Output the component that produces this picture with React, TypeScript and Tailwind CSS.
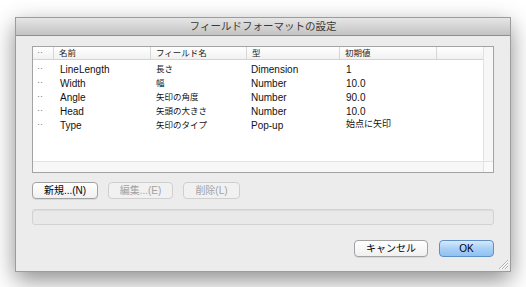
import React from "react";

const font = { fontFamily: '"Liberation Sans", "Noto Sans CJK JP", sans-serif' };

type Row = { name: string; field: string; type: string; init: string; initJp?: boolean };

const rows: Row[] = [
  { name: "LineLength", field: "長さ", type: "Dimension", init: "1" },
  { name: "Width", field: "幅", type: "Number", init: "10.0" },
  { name: "Angle", field: "矢印の角度", type: "Number", init: "90.0" },
  { name: "Head", field: "矢頭の大きさ", type: "Number", init: "10.0" },
  { name: "Type", field: "矢印のタイプ", type: "Pop-up", init: "始点に矢印", initJp: true },
];

const HeaderCell = ({ label, w }: { label: string; w: string }) => (
  <div className={`${w} h-full flex items-center border-r border-[#d6d6d6] pl-[5px] text-[8.5px] text-[#222]`}>
    {label}
  </div>
);

const Btn = ({
  label,
  w,
  disabled,
  primary,
}: {
  label: string;
  w: string;
  disabled?: boolean;
  primary?: boolean;
}) => (
  <button
    className={`${w} h-[17px] rounded-[4px] border text-[10px] leading-none flex items-center justify-center ${
      primary
        ? "border-[#5e8fc6] bg-gradient-to-b from-[#d8eafc] via-[#a9d0f6] to-[#8fc2f2] text-black"
        : disabled
        ? "border-[#cfcfcf] bg-[#f1f1f1] text-[#a3a3a3]"
        : "border-[#a2a2a2] bg-gradient-to-b from-white to-[#f0f0f0] text-black shadow-[0_1px_0_rgba(0,0,0,0.08)]"
    }`}
  >
    {label}
  </button>
);

export default function App() {
  return (
    <div className="w-[526px] h-[287px] bg-white pt-[17px] pl-[15px] overflow-hidden" style={font}>
      <div className="w-[496px] h-[255px] bg-[#ececec] border border-[#9c9c9c] shadow-[0_8px_22px_rgba(0,0,0,0.45)] flex flex-col relative">
        {/* title bar */}
        <div className="h-[18px] bg-gradient-to-b from-[#e6e6e6] to-[#c3c3c3] border-b border-[#8e8e8e] flex items-center justify-center text-[10.5px] text-[#3a3a3a]">
          フィールドフォーマットの設定
        </div>

        <div className="px-[16px] pt-[10px] flex flex-col">
          {/* table */}
          <div className="w-[462px] h-[127px] border border-[#a3a3a3] bg-white flex">
            <div className="flex-1 flex flex-col">
              <div className="h-[13px] flex bg-gradient-to-b from-white to-[#f1f1f1] border-b border-[#d3d3d3]">
                <div className="w-[21px] h-full flex items-center pl-[4px] border-r border-[#d6d6d6] text-[9px] text-[#777]">··</div>
                <HeaderCell label="名前" w="w-[97px]" />
                <HeaderCell label="フィールド名" w="w-[96px]" />
                <HeaderCell label="型" w="w-[93px]" />
                <HeaderCell label="初期値" w="w-[97px]" />
              </div>
              <div className="flex-1 pt-[2px]">
                {rows.map((r) => (
                  <div key={r.name} className="h-[14px] flex items-center text-[10px] text-[#111]">
                    <div className="w-[21px] pl-[4px] text-[9px] text-[#777]">··</div>
                    <div className="w-[97px] pl-[6px]">{r.name}</div>
                    <div className="w-[96px] pl-[5px] text-[8.5px]">{r.field}</div>
                    <div className="w-[93px] pl-[4px]">{r.type}</div>
                    <div className={`w-[97px] pl-[6px] ${r.initJp ? "text-[9px]" : ""}`}>{r.init}</div>
                  </div>
                ))}
              </div>
              <div className="h-[11px] bg-[#f7f7f7] border-t border-[#e2e2e2]" />
            </div>
            <div className="w-[10px] flex flex-col border-l border-[#e2e2e2] bg-[#f7f7f7]">
              <div className="flex-1" />
              <div className="h-[11px] bg-[#fafafa] border-t border-[#e2e2e2]" />
            </div>
          </div>

          {/* action buttons */}
          <div className="flex gap-[10px] mt-[9px]">
            <Btn label="新規...(N)" w="w-[66px]" />
            <Btn label="編集...(E)" w="w-[65px]" disabled />
            <Btn label="削除(L)" w="w-[57px]" disabled />
          </div>

          {/* status field */}
          <div className="w-[462px] h-[16px] mt-[10px] rounded-[3px] border border-[#d2d2d2] bg-[#e9e9e9] shadow-[inset_0_1px_1px_rgba(0,0,0,0.06)]" />

          {/* dialog buttons */}
          <div className="flex justify-end gap-[11px] mt-[15px] w-[462px]">
            <Btn label="キャンセル" w="w-[74px]" />
            <Btn label="OK" w="w-[55px]" primary />
          </div>
        </div>

        {/* resize grip */}
        <svg className="absolute right-[2px] bottom-[2px]" width="10" height="10" viewBox="0 0 10 10">
          <path d="M1 10 L10 1 M4 10 L10 4 M7 10 L10 7" stroke="#b0b0b0" strokeWidth="1" fill="none" />
          <path d="M2 10 L10 2 M5 10 L10 5 M8 10 L10 8" stroke="#fff" strokeWidth="1" fill="none" />
        </svg>
      </div>
    </div>
  );
}
